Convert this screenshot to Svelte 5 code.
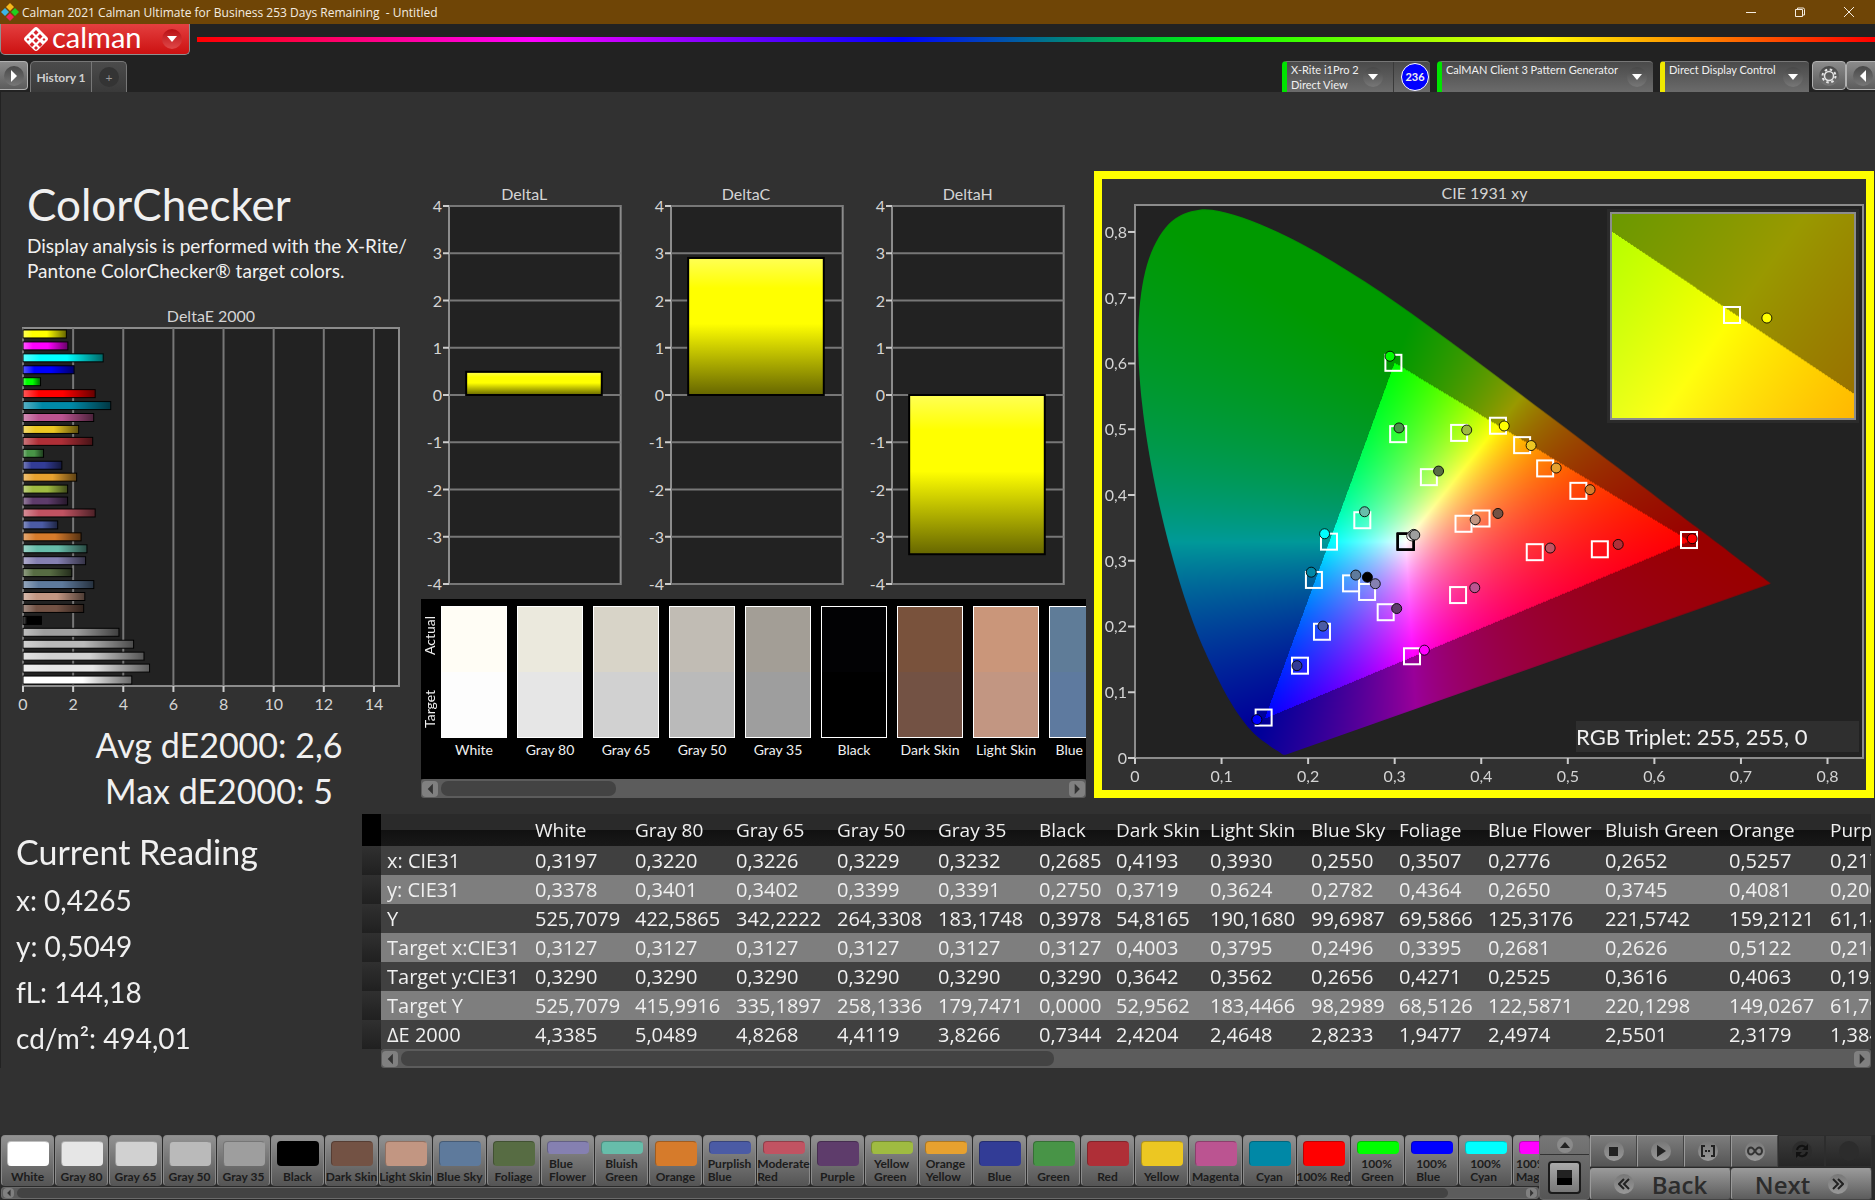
<script>
  import { onMount } from "svelte";

  const patches = [
    { name: "White", color: "#ffffff", target: "#fdfdfd", actual: "#fffdf5", de: 4.3385 },
    { name: "Gray 80", color: "#e6e6e6", target: "#e6e6e6", actual: "#ebe9dd", de: 5.0489 },
    { name: "Gray 65", color: "#d1d1d1", target: "#d1d1d1", actual: "#d8d4c8", de: 4.8268 },
    { name: "Gray 50", color: "#bababa", target: "#bababa", actual: "#c1bcb4", de: 4.4119 },
    { name: "Gray 35", color: "#9e9e9e", target: "#9e9e9e", actual: "#a39e96", de: 3.8266 },
    { name: "Black", color: "#000000", target: "#000000", actual: "#020204", de: 0.7344 },
    { name: "Dark Skin", color: "#735244", target: "#735244", actual: "#79523c", de: 2.4204 },
    { name: "Light Skin", color: "#c29682", target: "#c29682", actual: "#ca967a", de: 2.4648 },
    { name: "Blue Sky", color: "#5e7a9c", target: "#5e7a9f", actual: "#5f7c98", de: 2.8233 },
    { name: "Foliage", color: "#576c43", de: 1.9477 },
    { name: "Blue Flower", color: "#8580b1", de: 2.4974, wrap: true },
    { name: "Bluish Green", color: "#67bdaa", de: 2.5501, wrap: true },
    { name: "Orange", color: "#d67b2b", de: 2.3179 },
    { name: "Purplish Blue", color: "#4b5ba5", de: 1.384, wrap: true },
    { name: "Moderate Red", color: "#c15362", de: 2.88, wrap: true },
    { name: "Purple", color: "#5e3c6b", de: 1.78 },
    { name: "Yellow Green", color: "#9fbb41", de: 1.78, wrap: true },
    { name: "Orange Yellow", color: "#e7a12f", de: 2.14, wrap: true },
    { name: "Blue", color: "#323c96", de: 1.55 },
    { name: "Green", color: "#489447", de: 0.82 },
    { name: "Red", color: "#af2f37", de: 2.78 },
    { name: "Yellow", color: "#ecc722", de: 2.22 },
    { name: "Magenta", color: "#bb5491", de: 2.82 },
    { name: "Cyan", color: "#0088a6", de: 3.5 },
    { name: "100% Red", color: "#ff0000", de: 2.88 },
    { name: "100% Green", color: "#00ff00", de: 0.7, wrap: true },
    { name: "100% Blue", color: "#0000ff", de: 2.04, wrap: true },
    { name: "100% Cyan", color: "#00ffff", de: 3.2, wrap: true },
    { name: "100% Magenta", color: "#ff00ff", de: 1.79, wrap: true },
    { name: "100% Yellow", color: "#ffff00", de: 1.73, wrap: true },
  ];
  const deltaE = [...patches].reverse();

  const deltas = [
    { title: "DeltaL", value: 0.49 },
    { title: "DeltaC", value: 2.9 },
    { title: "DeltaH", value: -3.37 },
  ];
  const deltaTicks = [4, 3, 2, 1, 0, -1, -2, -3, -4];

  const columns = [
    { name: "White", width: 100 },
    { name: "Gray 80", width: 101 },
    { name: "Gray 65", width: 101 },
    { name: "Gray 50", width: 101 },
    { name: "Gray 35", width: 101 },
    { name: "Black", width: 77 },
    { name: "Dark Skin", width: 94 },
    { name: "Light Skin", width: 101 },
    { name: "Blue Sky", width: 88 },
    { name: "Foliage", width: 89 },
    { name: "Blue Flower", width: 117 },
    { name: "Bluish Green", width: 124 },
    { name: "Orange", width: 101 },
    { name: "Purplish Blue", width: 130 },
  ];
  const rows = [
    ["x: CIE31", "0,3197", "0,3220", "0,3226", "0,3229", "0,3232", "0,2685", "0,4193", "0,3930", "0,2550", "0,3507", "0,2776", "0,2652", "0,5257", "0,2171"],
    ["y: CIE31", "0,3378", "0,3401", "0,3402", "0,3399", "0,3391", "0,2750", "0,3719", "0,3624", "0,2782", "0,4364", "0,2650", "0,3745", "0,4081", "0,2006"],
    ["Y", "525,7079", "422,5865", "342,2222", "264,3308", "183,1748", "0,3978", "54,8165", "190,1680", "99,6987", "69,5866", "125,3176", "221,5742", "159,2121", "61,1420"],
    ["Target x:CIE31", "0,3127", "0,3127", "0,3127", "0,3127", "0,3127", "0,3127", "0,4003", "0,3795", "0,2496", "0,3395", "0,2681", "0,2626", "0,5122", "0,2160"],
    ["Target y:CIE31", "0,3290", "0,3290", "0,3290", "0,3290", "0,3290", "0,3290", "0,3642", "0,3562", "0,2656", "0,4271", "0,2525", "0,3616", "0,4063", "0,1923"],
    ["Target Y", "525,7079", "415,9916", "335,1897", "258,1336", "179,7471", "0,0000", "52,9562", "183,4466", "98,2989", "68,5126", "122,5871", "220,1298", "149,0267", "61,7930"],
    ["ΔE 2000", "4,3385", "5,0489", "4,8268", "4,4119", "3,8266", "0,7344", "2,4204", "2,4648", "2,8233", "1,9477", "2,4974", "2,5501", "2,3179", "1,3840"],
  ];

  // target x, target y, measured x, measured y, colour
  const points = [
    [0.3127, 0.329, 0.3197, 0.3378, "#ffffff"],
    [0.3127, 0.329, 0.322, 0.3401, "#d1d1d1"],
    [0.3127, 0.329, 0.3232, 0.3391, "#9e9e9e"],
    [0.3127, 0.329, 0.2685, 0.275, "#000000"],
    [0.4003, 0.3642, 0.4193, 0.3719, "#735244"],
    [0.3795, 0.3562, 0.393, 0.3624, "#c29682"],
    [0.2496, 0.2656, 0.255, 0.2782, "#5e7a9c"],
    [0.3395, 0.4271, 0.3507, 0.4364, "#576c43"],
    [0.2681, 0.2525, 0.2776, 0.265, "#8580b1"],
    [0.2626, 0.3616, 0.2652, 0.3745, "#67bdaa"],
    [0.5122, 0.4063, 0.5257, 0.4081, "#d67b2b"],
    [0.216, 0.192, 0.2171, 0.2006, "#4b5ba5"],
    [0.4618, 0.313, 0.4796, 0.3193, "#c15362"],
    [0.2896, 0.2217, 0.3023, 0.2273, "#5e3c6b"],
    [0.3744, 0.4944, 0.3832, 0.4988, "#9fbb41"],
    [0.4738, 0.4404, 0.4865, 0.441, "#e7a12f"],
    [0.1906, 0.1404, 0.1871, 0.1404, "#323c96"],
    [0.304, 0.4925, 0.305, 0.502, "#489447"],
    [0.537, 0.3174, 0.5582, 0.3248, "#af2f37"],
    [0.4472, 0.4758, 0.4576, 0.4752, "#ecc722"],
    [0.3732, 0.2478, 0.3925, 0.259, "#bb5491"],
    [0.2067, 0.2708, 0.2036, 0.2826, "#0088a6"],
    [0.64, 0.3315, 0.6437, 0.3335, "#ff0000"],
    [0.2985, 0.601, 0.2946, 0.611, "#00ff00"],
    [0.1486, 0.0615, 0.1408, 0.0584, "#0000ff"],
    [0.2241, 0.329, 0.219, 0.341, "#00ffff"],
    [0.32, 0.1547, 0.3343, 0.164, "#ff00ff"],
    [0.4193, 0.5053, 0.4265, 0.5049, "#ffff00"],
  ];

  const locus = [
    [0.1741, 0.005], [0.1714, 0.0051], [0.1689, 0.0069], [0.1644, 0.0109],
    [0.1566, 0.0177], [0.144, 0.0297], [0.1355, 0.0399], [0.1241, 0.0578],
    [0.1096, 0.0868], [0.0913, 0.1327], [0.0687, 0.2007], [0.0454, 0.295],
    [0.0235, 0.4127], [0.0082, 0.5384], [0.0039, 0.6548], [0.0139, 0.7502],
    [0.0389, 0.812], [0.0743, 0.8338], [0.1142, 0.8262], [0.1547, 0.8059],
    [0.1929, 0.7816], [0.2296, 0.7543], [0.2658, 0.7243], [0.3016, 0.6923],
    [0.3373, 0.6589], [0.3731, 0.6245], [0.4087, 0.5896], [0.4441, 0.5547],
    [0.4788, 0.5202], [0.5125, 0.4866], [0.5448, 0.4544], [0.5752, 0.4242],
    [0.6029, 0.3965], [0.627, 0.3725], [0.6482, 0.3514], [0.6915, 0.3083],
    [0.719, 0.2809], [0.7347, 0.2653],
  ];

  const MAX = 0.841;
  const zoomView = { x0: 0.3949, y0: 0.4809, size: 0.0488 };
  const axis = [0, 1, 2, 3, 4, 5, 6, 7, 8];
  const px = (x) => (x / MAX) * 100;
  const py = (y) => 100 - (y / MAX) * 100;
  const label = (n) => (n === 0 ? "0" : "0," + n);

  function xyToRgb(x, y) {
    const X = x / y;
    const Z = (1 - x - y) / y;
    const rgb = [
      3.2406 * X - 1.5372 - 0.4986 * Z,
      -0.9689 * X + 1.8758 + 0.0415 * Z,
      0.0557 * X - 0.204 + 1.057 * Z,
    ];
    const max = Math.max(...rgb);
    // colours outside the gamut triangle are dimmed
    const level = Math.min(...rgb) < -0.002 ? 153 : 255;
    return rgb.map((c) => (Math.max(c, 0) / max) * level);
  }

  function paint(canvas, x0, y0, size) {
    const w = canvas.width;
    const h = canvas.height;
    const ctx = canvas.getContext("2d");
    const image = ctx.createImageData(w, h);
    for (let j = 0; j < h; j++) {
      for (let i = 0; i < w; i++) {
        const x = x0 + ((i + 0.5) / w) * size;
        const y = y0 + (1 - (j + 0.5) / h) * size;
        const [r, g, b] = xyToRgb(x, y);
        image.data.set([r, g, b, 255], (j * w + i) * 4);
      }
    }
    ctx.putImageData(image, 0, 0);
  }

  // keep only what lies inside the horseshoe, as a smooth curve through its points
  function clipToLocus(canvas) {
    const ctx = canvas.getContext("2d");
    const pts = locus.map(([x, y]) => [
      (x / MAX) * canvas.width,
      (1 - y / MAX) * canvas.height,
    ]);
    const last = pts.length - 1;
    ctx.globalCompositeOperation = "destination-in";
    ctx.beginPath();
    ctx.moveTo(...pts[0]);
    for (let i = 0; i < last; i++) {
      const a = pts[Math.max(i - 1, 0)];
      const b = pts[i];
      const c = pts[i + 1];
      const d = pts[Math.min(i + 2, last)];
      ctx.bezierCurveTo(
        b[0] + (c[0] - a[0]) / 6,
        b[1] + (c[1] - a[1]) / 6,
        c[0] - (d[0] - b[0]) / 6,
        c[1] - (d[1] - b[1]) / 6,
        c[0],
        c[1]
      );
    }
    ctx.closePath();
    ctx.fill();
  }

  let diagram;
  let detail;

  onMount(() => {
    paint(diagram, 0, 0, MAX);
    clipToLocus(diagram);
    paint(detail, zoomView.x0, zoomView.y0, zoomView.size);
  });
</script>

{#snippet scrollbar(name, size)}
  <div class="scrollbar">
    <button aria-label="Scroll {name} left"><svg viewBox="0 0 10 14"><path d="M8 1v12L2 7z" /></svg></button>
    <div class="track"><div class="thumb" style="width: {size}%"></div></div>
    <button aria-label="Scroll {name} right"><svg viewBox="0 0 10 14"><path d="M2 1v12l6-6z" /></svg></button>
  </div>
{/snippet}

{#snippet chevron()}
  <span class="round"><svg width="10" height="6" viewBox="0 0 10 6"><path d="M0 0h10L5 6z" fill="#fff" /></svg></span>
{/snippet}

<div class="app">
  <header class="titlebar">
    <svg class="app-icon" width="18" height="18" viewBox="0 0 18 18">
      <path d="M9 0l4 4-4 4-4-4z" fill="#f5b81c" />
      <path d="M4 5l4 4-4 4-4-4z" fill="#3cb4e6" />
      <path d="M14 5l4 4-4 4-4-4z" fill="#1ed01e" />
      <path d="M9 10l4 4-4 4-4-4z" fill="#ee2358" />
    </svg>
    <span class="window-title">Calman 2021 Calman Ultimate for Business 253 Days Remaining&nbsp; - Untitled</span>
    <div class="window-buttons">
      <button aria-label="Minimize"><svg width="12" height="12"><path d="M1 6.5h10" /></svg></button>
      <button aria-label="Restore"><svg width="12" height="12"><path d="M1.500 3.500h7v7h-7zM3.500 3.500v-1.500h5.500q1.500 0 1.500 1.500v5.500h-1.500" /></svg></button>
      <button aria-label="Close"><svg width="12" height="12"><path d="M1 1l10 10M11 1L1 11" /></svg></button>
    </div>
  </header>

  <div class="brandbar">
    <button class="brand">
      <svg width="26" height="26" viewBox="0 0 26 26">
        <path d="M13 1q1 0 2 1l9 9q2 2 0 4l-9 9q-2 2-4 0l-9-9q-2-2 0-4l9-9q1-1 2-1z" fill="#fff" />
        <g fill="#d8242a">
          <path d="M13 4l2.500 2.500L13 9l-2.500-2.500zM9 8l2.500 2.500L9 13l-2.500-2.500zM17 8l2.500 2.500L17 13l-2.500-2.500zM13 12l2.500 2.500L13 17l-2.500-2.500zM5 12l1.500 1.500L5 15l-1.500-1.500zM21 12l1.500 1.500L21 15l-1.500-1.500zM9 16l2.500 2.500L9 21l-2.500-2.500zM17 16l2.500 2.500L17 21l-2.500-2.500zM13 20l2 2-2 2-2-2z" />
        </g>
      </svg>
      <span class="wordmark">calman</span>
      {@render chevron()}
    </button>
    <div class="rainbow"></div>
  </div>

  <nav class="toolbar">
    <button class="square play" aria-label="Show panel">
      <span class="round"><svg width="8" height="12"><path d="M1 0v12l6-6z" fill="#fff" /></svg></span>
    </button>
    <div class="tabs">
      <button class="tab">History 1</button>
      <button class="tab add" aria-label="Add history"><span class="round">+</span></button>
    </div>
    <div class="devices">
      <div class="device meter">
        <button><span>X-Rite i1Pro 2<br />Direct View</span>{@render chevron()}</button>
        <div class="count"><span>236</span></div>
      </div>
      <div class="device source">
        <button><span>CalMAN Client 3 Pattern Generator</span>{@render chevron()}</button>
      </div>
      <div class="device display">
        <button><span>Direct Display Control</span>{@render chevron()}</button>
      </div>
      <div class="pair">
        <button class="square" aria-label="Settings">
          <span class="round">
            <svg width="16" height="16" viewBox="0 0 16 16" fill="none" stroke="#e4e4e4">
              <circle cx="8" cy="8" r="4.500" stroke-width="1.500" />
              <circle cx="8" cy="8" r="6.500" stroke-width="2" stroke-dasharray="2.500 2.600" />
            </svg>
          </span>
        </button>
        <button class="square" aria-label="Collapse">
          <span class="round"><svg width="8" height="12"><path d="M7 0v12L1 6z" fill="#fff" /></svg></span>
        </button>
      </div>
    </div>
  </nav>

  <main>
    <div class="upper">
      <section class="summary">
        <h1>ColorChecker</h1>
        <p class="intro">Display analysis is performed with the X-Rite/<wbr />Pantone ColorChecker® target colors.</p>
        <h2 class="chart-title">DeltaE 2000</h2>
        <svg class="chart delta-e">
          <defs>
            <linearGradient id="shineX">
              <stop offset="0" stop-color="#fff" stop-opacity=".35" />
              <stop offset=".22" stop-color="#fff" stop-opacity="0" />
              <stop offset=".55" stop-color="#000" stop-opacity="0" />
              <stop offset="1" stop-color="#000" stop-opacity=".6" />
            </linearGradient>
          </defs>
          <rect class="frame" width="100%" height="100%" />
          {#each [0, 2, 4, 6, 8, 10, 12, 14] as t}
            <line class="grid" x1="{(t / 15) * 100}%" x2="{(t / 15) * 100}%" y2="100%" />
            <svg x="{(t / 15) * 100}%" y="100%" overflow="visible">
              <line class="tick" y2="6" />
              <text y="24" text-anchor="middle">{t}</text>
            </svg>
          {/each}
          {#each deltaE as bar, i}
            <svg y="{((i + 0.5) / deltaE.length) * 100}%" overflow="visible">
              <rect y="-4" width="{(bar.de / 15) * 100}%" height="8" fill={bar.color} />
              <rect y="-4" width="{(bar.de / 15) * 100}%" height="8" fill="url(#shineX)" stroke="#000" />
            </svg>
          {/each}
        </svg>
        <p class="stats">Avg dE2000: 2,6<br />Max dE2000: 5</p>
      </section>

      <section class="middle">
        <div class="deltas">
          {#each deltas as d}
            <div class="delta">
              <h2 class="chart-title">{d.title}</h2>
              <svg class="chart">
                <defs>
                  <linearGradient id="shineY" x2="0" y2="1">
                    <stop offset="0" stop-color="#ffff55" />
                    <stop offset=".22" stop-color="#ffff00" />
                    <stop offset=".48" stop-color="#ffff00" />
                    <stop offset="1" stop-color="#666600" />
                  </linearGradient>
                </defs>
                <rect class="frame" width="100%" height="100%" />
                {#each deltaTicks as t}
                  <svg y="{((4 - t) / 8) * 100}%" overflow="visible">
                    <line class="grid" x2="100%" />
                    <line class="tick" x1="-6" />
                    <text x="-7" y="6" text-anchor="end">{t}</text>
                  </svg>
                {/each}
                <rect
                  x="10%"
                  width="79%"
                  y="{((4 - Math.max(d.value, 0)) / 8) * 100}%"
                  height="{(Math.abs(d.value) / 8) * 100}%"
                  fill="url(#shineY)"
                  stroke="#000"
                  stroke-width="2"
                />
              </svg>
            </div>
          {/each}
        </div>

        <div class="compare">
          <div class="sides"><span>Actual</span><span>Target</span></div>
          {#each patches.slice(0, 9) as p}
            <figure>
              <div class="patch">
                <div style="background: {p.actual}"></div>
                <div style="background: {p.target}"></div>
              </div>
              <figcaption>{p.name}</figcaption>
            </figure>
          {/each}
        </div>
        {@render scrollbar("patches", 28)}
      </section>

      <section class="cie">
        <h2 class="chart-title">CIE 1931 xy</h2>
        <div class="plot">
          <canvas bind:this={diagram} width="728" height="552"></canvas>
          <svg class="chart">
            <rect class="outline" width="100%" height="100%" />
            {#each axis as n}
              <svg x="{px(n / 10)}%" y="100%" overflow="visible">
                <line class="tick" y2="6" />
                <text y="24" text-anchor="middle">{label(n)}</text>
              </svg>
              <svg y="{py(n / 10)}%" overflow="visible">
                <line class="tick" x1="-7" />
                <text x="-8" y="6" text-anchor="end">{label(n)}</text>
              </svg>
            {/each}
            {#each points as [tx, ty]}
              <svg x="{px(tx)}%" y="{py(ty)}%" overflow="visible">
                <rect class="target" class:white={tx === 0.3127} x="-8" y="-8" width="16" height="16" />
              </svg>
            {/each}
            {#each points as [, , mx, my, color]}
              <circle class="measured" cx="{px(mx)}%" cy="{py(my)}%" r="5" fill={color} />
            {/each}
          </svg>
          <div class="detail">
            <canvas bind:this={detail} width="244" height="205"></canvas>
            <svg class="chart">
              <svg x="50%" y="50%" overflow="visible">
                <rect class="target" x="-9" y="-9" width="16" height="16" />
              </svg>
              <circle class="measured" cx="64%" cy="51%" r="5" fill="#ff0" />
            </svg>
          </div>
          <p class="triplet">RGB Triplet: 255, 255, 0</p>
        </div>
      </section>
    </div>

    <div class="lower">
      <section class="reading">
        <h2>Current Reading</h2>
        <p>x: 0,4265</p>
        <p>y: 0,5049</p>
        <p>fL: 144,18</p>
        <p>cd/m²: 494,01</p>
      </section>
      <section class="data">
        <div class="table-view">
          <table>
            <colgroup>
              <col class="gutter" />
              <col class="names" />
              {#each columns as c}
                <col style="width: {c.width}px" />
              {/each}
            </colgroup>
            <thead>
              <tr>
                <td class="corner"></td>
                <td></td>
                {#each columns as c}
                  <th scope="col">{c.name}</th>
                {/each}
              </tr>
            </thead>
            <tbody>
              {#each rows as row}
                <tr>
                  <td class="row-head"></td>
                  <th scope="row">{row[0]}</th>
                  {#each row.slice(1) as cell}
                    <td>{cell}</td>
                  {/each}
                </tr>
              {/each}
            </tbody>
          </table>
        </div>
        {@render scrollbar("table", 45)}
      </section>
    </div>
  </main>

  <footer>
    <div class="picker">
      <div class="picker-row">
        {#each patches as p}
          <button class="pick" class:wrap={p.wrap}>
            <span class="chip" style="background: {p.color}"></span>
            <span class="pick-name">{p.name}</span>
          </button>
        {/each}
      </div>
      {@render scrollbar("colors", 95)}
    </div>

    <div class="window-pick">
      <button class="up" aria-label="Expand">
        <span class="round"><svg width="10" height="6"><path d="M0 6h10L5 0z" fill="#222" /></svg></span>
      </button>
      <button class="pattern" aria-label="Pattern window"><span></span></button>
    </div>

    <div class="transport">
      <button aria-label="Stop"><span class="round"><svg width="9" height="9"><path d="M0 0h9v9H0z" fill="#222" /></svg></span></button>
      <button aria-label="Play"><span class="round"><svg width="10" height="12"><path d="M1 0v12l9-6z" fill="#222" /></svg></span></button>
      <button aria-label="Read series">
        <span class="round"><svg width="14" height="14" fill="none" stroke="#222" stroke-width="2"><path d="M4 2H1v10h3M10 2h3v10h-3" /><path d="M4 7h6" stroke-dasharray="2 1" /></svg></span>
      </button>
      <button aria-label="Read continuously">
        <span class="round"><svg width="16" height="10" fill="none" stroke="#333" stroke-width="2"><path d="M8 5C6 2 5 1.500 4 1.500a3 3.500 0 0 0 0 7C5 8.500 6 8 8 5s3-3.500 4-3.500a3 3.500 0 0 1 0 7C11 8.500 10 8 8 5z" /></svg></span>
      </button>
      <button class="off" aria-label="Refresh">
        <span class="round"><svg width="14" height="14" fill="none" stroke="#111" stroke-width="2"><path d="M2 6a5 5 0 0 1 9-2M12 8a5 5 0 0 1-9 2" /><path d="M13 0v6H7zM1 14V8h6z" fill="#111" stroke="none" /></svg></span>
      </button>
      <button class="off" aria-label="Record"><span class="round"></span></button>
      <button class="step">
        <span class="round"><svg width="12" height="12" fill="none" stroke="#222" stroke-width="2"><path d="M6 1L1 6l5 5M11 1L6 6l5 5" /></svg></span>
        Back
      </button>
      <button class="step">
        Next
        <span class="round"><svg width="12" height="12" fill="none" stroke="#222" stroke-width="2"><path d="M1 1l5 5-5 5M6 1l5 5-5 5" /></svg></span>
      </button>
    </div>
  </footer>
</div>

<style>
  :global(body) {
    margin: 0;
    background: #313131;
  }

  .app {
    display: flex;
    flex-direction: column;
    min-height: 100vh;
    color: #f0f0f0;
    font-family: Lato, Carlito, sans-serif;
    font-size: 16px;
    overflow: hidden;
  }

  .app * {
    box-sizing: border-box;
  }

  button {
    margin: 0;
    padding: 0;
    border: 0;
    background: none;
    color: inherit;
    font: inherit;
  }

  h1,
  h2,
  p,
  figure {
    margin: 0;
    font-weight: 400;
  }

  .titlebar {
    display: flex;
    align-items: center;
    height: 24px;
    padding: 0 2px 0 1px;
    background: #6f4506;
  }

  .window-title {
    margin-left: 3px;
    font: 12px "Open Sans", sans-serif;
    color: #f4ece0;
  }

  .window-buttons {
    display: flex;
    margin-left: auto;
  }

  .window-buttons button {
    display: grid;
    place-items: center;
    width: 49px;
    height: 24px;
  }

  .window-buttons path {
    fill: none;
    stroke: #f4ece0;
  }

  .brandbar {
    display: flex;
    align-items: flex-start;
    height: 37px;
    background: #222;
  }

  .brand {
    display: flex;
    align-items: center;
    width: 190px;
    height: 31px;
    padding: 0 7px 0 22px;
    border: 1px solid #8f8f8f;
    border-top: 0;
    border-radius: 0 0 5px 5px;
    background: linear-gradient(#e43f3f, #cc1111);
    color: #fff;
  }

  .wordmark {
    margin: 0 auto 0 3px;
    padding-bottom: 4px;
    font-size: 29px;
    line-height: 28px;
  }

  .brand .round {
    background: linear-gradient(#b81014, #e04848);
  }

  .rainbow {
    flex: 1;
    height: 5px;
    margin: 13px 0 0 7px;
    background: linear-gradient(90deg, #f00, #f0f 20%, #00f 42%, #0f0 61%, #ff0 80%, #f00);
  }

  .round {
    display: inline-grid;
    place-items: center;
    flex: none;
    width: 20px;
    height: 20px;
    border-radius: 50%;
    background: linear-gradient(#484848, #777);
  }

  .toolbar {
    display: flex;
    height: 31px;
    background: #222;
  }

  .square {
    display: grid;
    place-items: center;
    width: 34px;
    height: 29px;
    border: 1px solid #b0b0b0;
    border-radius: 4px;
    background: linear-gradient(#8b8b8b, #5c5c5c);
  }

  .square.play {
    width: 28px;
    border-left: 0;
    border-radius: 0 4px 4px 0;
  }

  .tabs {
    display: flex;
    margin-left: 2px;
    border: 1px solid #777;
    border-bottom: 0;
    border-radius: 5px 5px 0 0;
    background: linear-gradient(#4b4b4b, #3a3a3a);
  }

  .tab {
    width: 60px;
    font-size: 12px;
    font-weight: 700;
    color: #d0d0d0;
  }

  .tab.add {
    width: 35px;
    border-left: 1px solid #777;
    font-weight: 400;
    color: #999;
  }

  .tab.add .round {
    background: #343434;
  }

  .devices {
    display: flex;
    gap: 7px;
    margin-left: auto;
  }

  .device {
    display: flex;
    border-top: 1px solid #777;
    border-left: 5px solid #00e400;
    border-radius: 4px 4px 0 0;
    background: linear-gradient(#4a4a4a, #6b6b6b);
    font-size: 11px;
    line-height: 15px;
    white-space: nowrap;
  }

  .device button {
    display: flex;
    flex: 1;
    align-items: flex-start;
    justify-content: space-between;
    padding: 0 6px 0 4px;
    text-align: left;
  }

  .device .round {
    margin-top: 5px;
  }

  .meter {
    width: 148px;
  }

  .meter button {
    padding-right: 10px;
  }

  .source {
    width: 216px;
  }

  .display {
    width: 149px;
    border-left-color: #f0e800;
  }

  .count {
    display: grid;
    place-items: center end;
    width: 37px;
    padding-right: 1px;
    border-left: 1px solid #3a3a3a;
  }

  .count span {
    width: 28px;
    height: 28px;
    border: 1px solid #fff;
    border-radius: 50%;
    background: #00f;
    font-weight: 700;
    line-height: 26px;
    text-align: center;
  }

  .pair {
    display: flex;
    width: 63px;
    margin-left: -4px;
    overflow: hidden;
  }

  .pair .square {
    flex: none;
  }

  main {
    padding-top: 79px;
    border-left: 1px solid #222;
  }

  .upper {
    display: grid;
    grid-template-columns: minmax(0, 420fr) minmax(0, 673fr) minmax(0, 781fr);
    align-items: start;
    height: 643px;
  }

  .chart-title {
    font-size: 16px;
    line-height: 20px;
    text-align: center;
    color: #d4d4d4;
  }

  .chart {
    display: block;
    overflow: visible;
  }

  .chart text {
    font-size: 16px;
    fill: #d4d4d4;
  }

  .frame {
    fill: #222;
    stroke: #8c8c8c;
    stroke-width: 2;
  }

  .grid {
    stroke: #777;
    stroke-width: 2;
  }

  .tick {
    stroke: #ccc;
    stroke-width: 2;
  }

  .summary {
    padding: 9px 22px 0 22px;
  }

  h1 {
    padding-left: 4px;
    font-size: 44px;
    line-height: 48px;
  }

  .intro {
    margin: 5px -16px 23px 4px;
    font-size: 19px;
    line-height: 25px;
  }

  .delta-e {
    width: 100%;
    height: 358px;
    margin-top: 2px;
  }

  .stats {
    margin-top: 36px;
    padding-left: 16px;
    font-size: 34px;
    line-height: 46px;
    text-align: center;
  }

  .middle {
    padding-right: 8px;
  }

  .deltas {
    display: grid;
    grid-template-columns: repeat(3, 1fr);
    padding-top: 13px;
  }

  .delta {
    padding: 0 22px 0 7px;
  }

  .delta .chart {
    width: calc(100% - 21px);
    height: 378px;
    margin: 2px 0 0 21px;
  }

  .compare {
    display: flex;
    gap: 10px;
    height: 180px;
    margin-top: 15px;
    padding-top: 7px;
    background: #000;
    overflow: hidden;
  }

  .sides {
    display: flex;
    flex-direction: row-reverse;
    flex: none;
    justify-content: space-between;
    width: 10px;
    height: 132px;
    padding: 10px 0;
    font-size: 14px;
    line-height: 18px;
    writing-mode: vertical-rl;
    transform: rotate(180deg);
  }

  figure {
    flex: none;
    width: 66px;
  }

  .patch {
    display: grid;
    height: 132px;
    border: 1px solid #fff;
  }

  figcaption {
    margin: 3px -8px 0;
    font-size: 14px;
    line-height: 18px;
    text-align: center;
  }

  .scrollbar {
    display: flex;
    align-items: center;
    height: 19px;
    padding: 0 1px;
    border-radius: 3px;
    background: #5c5c5c;
  }

  .scrollbar button {
    display: grid;
    place-items: center;
    width: 16px;
    height: 16px;
    border-radius: 4px;
    background: #808080;
  }

  .scrollbar svg {
    height: 12px;
    fill: #333;
  }

  .track {
    flex: 1;
    padding: 0 3px;
  }

  .thumb {
    height: 15px;
    border-radius: 7px;
    background: #434343;
  }

  .cie {
    margin-right: 1px;
    padding: 5px 3px 32px 33px;
    border: 8px solid #ff0;
  }

  .cie .chart-title {
    margin: -1px 29px 0 0;
  }

  .plot {
    display: grid;
    height: 553px;
    margin-top: 2px;
    background: #222;
  }

  .plot > canvas,
  .plot > .chart {
    grid-area: 1 / 1;
    width: 100%;
    height: 553px;
  }

  .outline {
    fill: none;
    stroke: #8c8c8c;
    stroke-width: 2;
  }

  .target {
    fill: none;
    stroke: #fff;
    stroke-width: 2;
  }

  .target.white {
    stroke: #000;
  }

  .measured {
    stroke: #000;
    stroke-opacity: 0.85;
  }

  .detail {
    grid-area: 1 / 1;
    justify-self: end;
    display: grid;
    width: 246px;
    height: 208px;
    margin: 7px 7px 0 0;
    border: 2px solid #8c8c8c;
    outline: 3px solid #2b2b2b;
  }

  .detail > * {
    grid-area: 1 / 1;
    width: 100%;
    height: 204px;
  }

  .triplet {
    grid-area: 1 / 1;
    align-self: end;
    justify-self: end;
    width: 283px;
    margin: 0 4px 6px 0;
    background: #2f2f2f;
    font-size: 22px;
    line-height: 31px;
  }

  .lower {
    display: flex;
  }

  .reading {
    flex: none;
    width: 361px;
    padding: 12px 0 0 15px;
    font-size: 28px;
  }

  .reading h2 {
    font-size: 34px;
    line-height: 51px;
  }

  .reading p {
    line-height: 46px;
  }

  .data {
    flex: 1;
    min-width: 0;
    padding-right: 4px;
  }

  .data :global(.scrollbar) {
    margin-left: 19px;
  }

  .table-view {
    overflow: hidden;
  }

  table {
    width: 1592px;
    border-collapse: collapse;
    table-layout: fixed;
    font: 20px "Open Sans", "Noto Sans", sans-serif;
  }

  .gutter {
    width: 19px;
  }

  .names {
    width: 148px;
  }

  th,
  td {
    padding: 0 0 0 6px;
    font-weight: 400;
    line-height: 28px;
    text-align: left;
    white-space: nowrap;
  }

  thead tr {
    height: 32px;
    background: linear-gradient(#2a2a2a 50%, #111 50%, #181818);
  }

  thead th {
    font-size: 19px;
  }

  tbody tr {
    height: 29px;
    background: #404040;
  }

  tbody tr:nth-child(even) {
    background: #7e7e7e;
  }

  .corner {
    background: #000;
  }

  .row-head {
    background: linear-gradient(#303030, #202020);
  }

  footer {
    display: flex;
    height: 65px;
    margin-top: auto;
    background: #2a2a2a;
  }

  .picker {
    flex: 1;
    min-width: 0;
    padding-left: 1px;
  }

  .picker-row {
    display: flex;
    gap: 1px;
    height: 52px;
    overflow: hidden;
  }

  .pick {
    display: flex;
    flex-direction: column;
    align-items: center;
    justify-content: space-between;
    flex: none;
    width: 53px;
    height: 51px;
    padding: 5px 0 2px;
    border: 1px solid #8a8a8a;
    border-bottom-color: #555;
    border-radius: 4px;
    background: linear-gradient(#929292, #555);
    color: #1c1c1c;
    font-size: 12px;
    font-weight: 700;
    line-height: 13px;
  }

  .chip {
    width: 42px;
    height: 25px;
    border: 1px solid rgb(0 0 0 / 25%);
    border-right-color: transparent;
    border-bottom-color: transparent;
    border-radius: 4px;
  }

  .wrap .chip {
    height: 13px;
  }

  .pick-name {
    white-space: nowrap;
  }

  .wrap .pick-name {
    width: min-content;
    text-align: left;
    white-space: normal;
  }

  .picker :global(.scrollbar) {
    height: 12px;
    border: 1px solid #6a6a6a;
  }

  .picker :global(.scrollbar button) {
    width: 11px;
    height: 10px;
  }

  .picker :global(.scrollbar svg) {
    height: 8px;
  }

  .picker :global(.thumb) {
    height: 10px;
  }

  .window-pick {
    display: flex;
    flex-direction: column;
    align-items: center;
    width: 51px;
    border: 1px solid #666;
    border-radius: 4px;
    background: linear-gradient(#777, #555);
  }

  .up {
    width: 100%;
    height: 19px;
    border-bottom: 1px solid #333;
    line-height: 0;
  }

  .up .round {
    width: 16px;
    height: 16px;
    background: #8a8a8a;
  }

  .pattern {
    display: grid;
    place-items: center;
    width: 33px;
    height: 33px;
    margin-top: 6px;
    border: 2px solid #1a1a1a;
    border-radius: 4px;
    background: linear-gradient(#aaa, #777);
  }

  .pattern span {
    width: 15px;
    height: 15px;
    background: linear-gradient(#222 50%, #000 50%);
  }

  .transport {
    display: grid;
    grid-template-columns: repeat(6, 47px);
    grid-template-rows: 32px 32px;
    gap: 1px 0;
    width: 285px;
  }

  .transport button {
    display: grid;
    place-items: center;
    border: 1px solid #444;
    border-top-color: #999;
    border-left-color: #999;
    background: linear-gradient(#7d7d7d, #555);
  }

  .transport .round {
    background: linear-gradient(#777, #999);
  }

  .transport .off {
    border-color: #2d2d2d;
    background: linear-gradient(#3a3a3a, #262626);
  }

  .transport .off .round {
    background: #2c2c2c;
  }

  .transport .step {
    display: flex;
    align-items: center;
    justify-content: center;
    gap: 18px;
    grid-column: span 3;
    border-radius: 3px;
    background: linear-gradient(#999, #5c5c5c);
    color: #2c2c2c;
    font: 600 24px "Open Sans", sans-serif;
  }
</style>
